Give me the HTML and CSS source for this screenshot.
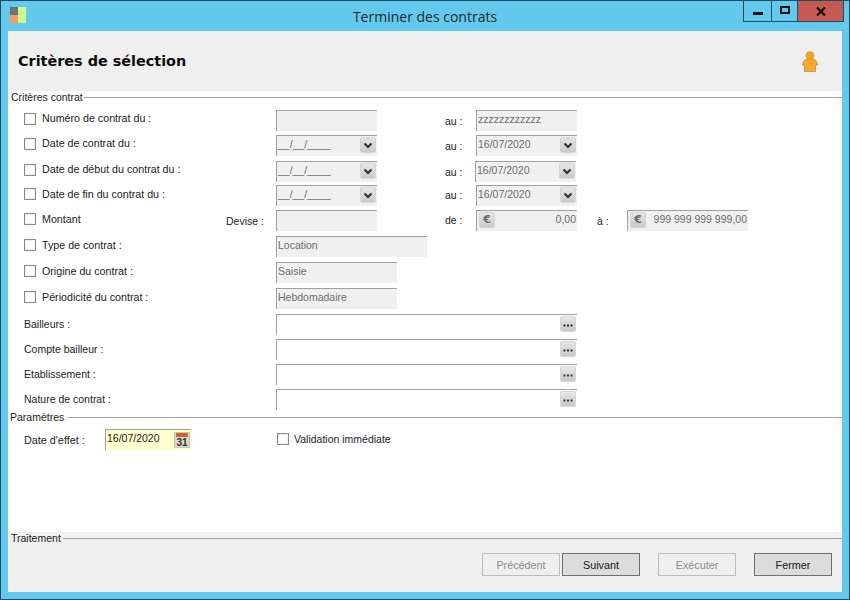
FILE: index.html
```html
<!DOCTYPE html>
<html lang="fr">
<head>
<meta charset="utf-8">
<title>Terminer des contrats</title>
<link rel="stylesheet" href="styles.css">
</head>
<body>
<svg class="defs" width="0" height="0" aria-hidden="true">
  <symbol id="chev" viewBox="0 0 16 16"><path d="M4.5 6.5 L8 10 L11.5 6.5" fill="none" stroke="#2c3440" stroke-width="2.2"/></symbol>
  <symbol id="dots" viewBox="0 0 16 16"><path d="M3.5 8.5h2v2h-2zM7 8.5h2v2H7zM10.5 8.5h2v2h-2z" fill="#2c3440"/></symbol>
</svg>
<div class="window">
  <header class="titlebar">
    <div class="appicon"><span class="sq-a"></span><span class="sq-b"></span><span class="sq-c"></span></div>
    <div class="wintitle">Terminer des contrats</div>
    <div class="controls">
      <div class="ctl ctl-min"><span class="bar"></span></div>
      <div class="ctl ctl-max"><span class="box"></span></div>
      <div class="ctl ctl-close">
        <svg width="10" height="9" viewBox="0 0 10 9"><path d="M1 .5 L9 8.5 M9 .5 L1 8.5" stroke="#111" stroke-width="2.2" fill="none"/></svg>
      </div>
    </div>
  </header>
  <div class="content">
    <div class="head">
      <h1 class="pagetitle">Critères de sélection</h1>
      <svg class="person" width="16" height="21" viewBox="0 0 16 21">
        <circle cx="8" cy="4.6" r="4" fill="#fba823" stroke="#c98a2a" stroke-width=".6"/>
        <path d="M3.5 8.5 C5.5 7.5 10.5 7.5 12.5 8.5 C14.5 9.5 15.5 11.5 15.5 14 L13.5 14.5 L13.5 20.5 L2.5 20.5 L2.5 14.5 L.5 14 C.5 11.5 1.5 9.5 3.5 8.5 Z" fill="#fba823" stroke="#a98a55" stroke-width=".7"/>
      </svg>
    </div>
    <main class="body">
      <div class="legend legend-first"><span>Critères contrat</span><i></i></div>
      <div class="form">
        <div class="row">
          <label class="lab up"><span class="cb"></span><span class="txt">Numéro de contrat du :</span></label>
          <div class="field w101"></div>
          <span class="au low">au :</span>
          <div class="field w101"><span class="val">zzzzzzzzzzzz</span></div>
        </div>
        <div class="row">
          <label class="lab up"><span class="cb"></span><span class="txt">Date de contrat du :</span></label>
          <div class="field w101"><span class="val">__/__/____</span><span class="btn"><svg width="16" height="16"><use href="#chev"/></svg></span></div>
          <span class="au low">au :</span>
          <div class="field w101"><span class="val">16/07/2020</span><span class="btn"><svg width="16" height="16"><use href="#chev"/></svg></span></div>
        </div>
        <div class="row">
          <label class="lab up"><span class="cb"></span><span class="txt">Date de début du contrat du :</span></label>
          <div class="field w101"><span class="val">__/__/____</span><span class="btn"><svg width="16" height="16"><use href="#chev"/></svg></span></div>
          <span class="au low">au :</span>
          <div class="field w101 nudge"><span class="val">16/07/2020</span><span class="btn"><svg width="16" height="16"><use href="#chev"/></svg></span></div>
        </div>
        <div class="row">
          <label class="lab"><span class="cb"></span><span class="txt">Date de fin du contrat du :</span></label>
          <div class="field w101"><span class="val">__/__/____</span><span class="btn"><svg width="16" height="16"><use href="#chev"/></svg></span></div>
          <span class="au">au :</span>
          <div class="field w101"><span class="val">16/07/2020</span><span class="btn"><svg width="16" height="16"><use href="#chev"/></svg></span></div>
        </div>
        <div class="row">
          <label class="lab"><span class="cb"></span><span class="txt">Montant</span></label>
          <span class="devise">Devise :</span>
          <div class="field w101"></div>
          <span class="au">de :</span>
          <div class="field w101"><span class="btn btn-left euro">€</span><span class="val val-right">0,00</span></div>
          <span class="a">à :</span>
          <div class="field w121"><span class="btn btn-left euro">€</span><span class="val val-right">999 999 999 999,00</span></div>
        </div>
        <div class="row">
          <label class="lab"><span class="cb"></span><span class="txt">Type de contrat :</span></label>
          <div class="field w151"><span class="val">Location</span></div>
        </div>
        <div class="row">
          <label class="lab"><span class="cb"></span><span class="txt">Origine du contrat :</span></label>
          <div class="field w121"><span class="val">Saisie</span></div>
        </div>
        <div class="row">
          <label class="lab"><span class="cb"></span><span class="txt">Périodicité du contrat :</span></label>
          <div class="field w121"><span class="val">Hebdomadaire</span></div>
        </div>
        <div class="row">
          <label class="lab down">Bailleurs :</label>
          <div class="field lookup"><span class="btn"><svg width="16" height="16"><use href="#dots"/></svg></span></div>
        </div>
        <div class="row">
          <label class="lab down">Compte bailleur :</label>
          <div class="field lookup"><span class="btn"><svg width="16" height="16"><use href="#dots"/></svg></span></div>
        </div>
        <div class="row">
          <label class="lab down">Etablissement :</label>
          <div class="field lookup"><span class="btn"><svg width="16" height="16"><use href="#dots"/></svg></span></div>
        </div>
        <div class="row">
          <label class="lab down">Nature de contrat :</label>
          <div class="field lookup"><span class="btn"><svg width="16" height="16"><use href="#dots"/></svg></span></div>
        </div>
      </div>
      <div class="legend legend-params"><span>Paramètres</span><i></i></div>
      <div class="params">
        <span class="effet-lab">Date d'effet :</span>
        <div class="field effet"><span class="val val-dark">16/07/2020</span>
          <svg class="cal" width="16" height="16" viewBox="0 0 16 16">
            <rect x=".5" y=".5" width="15" height="15" fill="#d9d9c8" stroke="#c9c9b0"/>
            <rect x="2" y="1" width="12" height="4" fill="#d2622c"/>
            <text x="8" y="14" text-anchor="middle" class="caltext">31</text>
          </svg>
        </div>
        <label class="valid"><span class="cb"></span>Validation immédiate</label>
      </div>
    </main>
    <footer class="foot">
      <div class="legend"><span>Traitement</span><i></i></div>
      <div class="buttons">
        <button class="pb" disabled>Précédent</button>
        <button class="pb on">Suivant</button>
        <button class="pb gap" disabled>Exécuter</button>
        <button class="pb on gap">Fermer</button>
      </div>
    </footer>
  </div>
</div>
</body>
</html>
```
FILE: styles.css
```css
* { box-sizing: border-box; }
html, body { margin: 0; padding: 0; }
body { width: 850px; height: 600px; overflow: hidden; font-family: "Liberation Sans", Arial, sans-serif; font-size: 10.5px; color: #222; }
.defs { display: block; height: 0; }
.window { width: 850px; height: 600px; background: #63c9ec; border: 1px solid #1c4f66; display: flex; flex-direction: column; padding: 0 7px 7px; }

.titlebar { height: 30px; display: flex; position: relative; flex: none; }
.appicon { width: 16px; height: 16px; margin: 6px 0 0 2px; display: grid; grid-template-columns: 8px 8px; grid-template-rows: 8px 8px; }
.sq-a { background: #717171; }
.sq-b { background: #cdf590; grid-row: 1 / 3; grid-column: 2; }
.sq-c { background: #f79a62; }
.wintitle { position: absolute; left: 0; right: 0; top: 6px; text-align: center; font-family: "Open Sans", sans-serif; font-size: 14px; line-height: 19px; color: #1a2a30; }
.controls { position: absolute; right: -2px; top: -1px; height: 22px; display: flex; border: 1px solid #1f4c60; border-top-color: #1c4f66; }
.ctl { height: 20px; display: flex; align-items: center; justify-content: center; border-left: 1px solid #1f4c60; }
.ctl-min { width: 27px; border-left: 0; }
.ctl-max { width: 26px; }
.ctl-close { width: 46px; background: #c75a50; }
.bar { width: 10px; height: 3px; background: #111; margin-top: 5px; }
.box { width: 10px; height: 8px; border: 2px solid #111; margin-top: -2px; }

.content { flex: 1; display: flex; flex-direction: column; background: #fff; min-height: 0; }
.head { height: 60px; flex: none; background: #efefef; display: flex; align-items: center; justify-content: space-between; padding: 0 24px 0 10px; }
.pagetitle { margin: 0; font-family: "DejaVu Sans", sans-serif; font-size: 14.4px; font-weight: 700; color: #0c0c0c; }
.person { margin-top: 0; }

.body { flex: 1; min-height: 0; }
.legend { height: 13px; display: flex; align-items: center; padding-left: 3px; line-height: 13px; color: #222; }
.legend i { flex: 1; height: 1px; background: #a0a0a0; margin-left: 2px; }
.legend-first i { margin-left: 1px; }
.legend-params { padding-left: 2px; }
.legend-params i { margin-left: 4px; }

.form { margin-top: 6px; display: grid; grid-template-rows: 25px 26px 24px 25px 26px 26px 26px 26px 25px 25px 25px 22px; padding-left: 16px; }
.row { display: grid; grid-template-columns: 202px 50px 169px 31px 121px 30px 121px; align-items: start; height: 20px; }
.lab { grid-column: 1 / 3; grid-row: 1; display: flex; align-items: center; height: 17px; white-space: nowrap; }
.txt { font-size: 10.7px; }
.lab.up .txt { margin-top: -2px; }
.lab.down { padding-top: 2px; }
.row .devise { grid-column: 2; grid-row: 1; margin-top: 5px; }
.lab + .field, .devise + .field { grid-column: 3; grid-row: 1; }
.au { margin-top: 4px; }
.au.low { margin-top: 5px; }
.a { margin-top: 5px; }
.cb { width: 12px; height: 12px; margin-right: 6px; flex: none; background: #fff; border: 1px solid #8a8a8a; box-shadow: inset 0 0 0 1px #f2f2f2; }

.field { height: 21px; background: #f0f0f0; border-top: 1px solid #a0a0a0; border-left: 1px solid #a0a0a0; display: flex; align-items: flex-start; position: relative; color: #6d6d6d; }
.w101 { width: 101px; }
.w121 { width: 121px; }
.w151 { width: 151px; }
.nudge { margin-left: -1px; }
.lookup { grid-column: 3 / 6 !important; width: 301px; background: #fff; }
.val { padding: 1px 0 0 1px; line-height: 14px; white-space: nowrap; }
.val-right { margin-left: auto; padding-right: 1px; }
.val-dark { color: #222; }
.btn { position: absolute; right: 1px; top: 1px; width: 16px; height: 16px; background: linear-gradient(#e6e6e6, #c9c9c9); border: 1px solid #d5d5d5; border-radius: 2px; display: flex; align-items: center; justify-content: center; }
.btn svg { margin: -1px; }
.btn-left { position: static; margin: 1px 0 0 2px; flex: none; }
.euro { font-family: "DejaVu Sans", sans-serif; font-size: 11px; font-weight: 700; color: #666; line-height: 14px; }

.params { display: flex; align-items: flex-start; padding-left: 16px; margin-top: 5px; }
.effet-lab { width: 81px; margin-top: 5px; font-size: 10.8px; }
.field.effet { width: 86px; height: 21px; background: #ffffcf; color: #222; }
.cal { position: absolute; right: 1px; top: 2px; }
.caltext { font-family: "Liberation Sans", sans-serif; font-size: 10px; font-weight: 700; fill: #333; }
.valid { display: flex; align-items: center; margin: 1px 0 0 86px; height: 17px; }
.valid .cb { margin-right: 5px; }

.foot { height: 60px; flex: none; background: #f0f0f0; }
.buttons { display: flex; justify-content: flex-end; padding: 8px 10px 0 0; gap: 2px; }
.pb { width: 78px; height: 23px; padding: 0; font: 10.8px "Liberation Sans", sans-serif; background: #efefef; border: 1px solid #bcbcbc; color: #8c8c8c; }
.pb.on { background: #dcdcdc; border-color: #6f6f6f; color: #151515; }
.pb.gap { margin-left: 16px; }
```
